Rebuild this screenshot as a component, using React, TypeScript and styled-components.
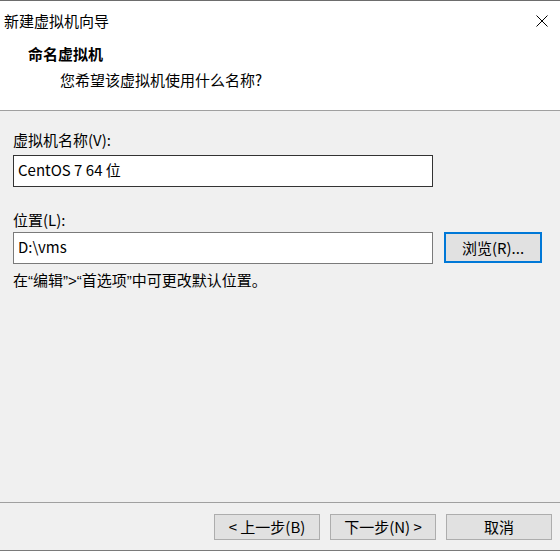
import React from 'react';
import styled, { createGlobalStyle } from 'styled-components';

const GlobalStyle = createGlobalStyle`
  html, body {
    margin: 0;
    padding: 0;
    background: #f0f0f0;
  }
  * {
    box-sizing: border-box;
  }
`;

const Window = styled.div`
  width: 560px;
  height: 551px;
  display: flex;
  flex-direction: column;
  background: #f0f0f0;
  border-top: 1px solid #6d6d6d;
  font-family: "Noto Sans CJK SC", "Noto Sans", sans-serif;
  font-size: 15px;
  line-height: 20px;
  color: #000;
`;

const TitleBar = styled.div`
  height: 39px;
  background: #fff;
  display: flex;
  align-items: center;
  justify-content: space-between;
  padding: 0 12px 0 4px;
`;

const CloseIcon = styled.svg`
  display: block;
  width: 12px;
  height: 12px;
`;

const Header = styled.div`
  height: 71px;
  background: #fff;
  border-bottom: 1px solid #a0a0a0;
  padding: 4px 0 0 28px;
`;

const Heading = styled.div`
  font-weight: bold;
`;

const SubHeading = styled.div`
  margin-top: 6px;
  padding-left: 32px;
`;

const Body = styled.div`
  flex: 1;
  padding: 19px 13px 0 13px;
  display: flex;
  flex-direction: column;
`;

const Label = styled.div<{ $top?: number; $gap: number }>`
  margin-top: ${p => p.$top ?? 0}px;
  margin-bottom: ${p => p.$gap}px;
`;

const Row = styled.div`
  display: flex;
  gap: 11px;
`;

const TextBox = styled.div<{ $dark?: boolean }>`
  width: 420px;
  height: 32px;
  background: #fff;
  border: 1px solid ${p => (p.$dark ? '#333333' : '#7a7a7a')};
  padding: 4px 0 0 4px;
`;

const Hint = styled.div`
  margin-top: 6px;
`;

const Quote = styled.span`
  font-family: "Liberation Sans", sans-serif;
`;

const Button = styled.div<{ $default?: boolean; $height?: number }>`
  width: ${p => (p.$default ? 98 : 106)}px;
  height: ${p => p.$height ?? 26}px;
  background: #e1e1e1;
  border: ${p => (p.$default ? '2px solid #0078d7' : '1px solid #adadad')};
  display: flex;
  align-items: center;
  justify-content: center;
`;

const Footer = styled.div`
  height: 49px;
  border-top: 1px solid #a0a0a0;
  border-bottom: 1px solid #7a7a7a;
  display: flex;
  justify-content: flex-end;
  gap: 10px;
  padding: 11px 8px 0 0;
`;

export default function App() {
  return (
    <>
      <GlobalStyle />
      <Window>
        <TitleBar>
          <div>新建虚拟机向导</div>
          <CloseIcon viewBox="0 0 12 12">
            <path d="M0.5 0.5 L11.5 11.5 M11.5 0.5 L0.5 11.5" stroke="#000" strokeWidth="1" fill="none" />
          </CloseIcon>
        </TitleBar>
        <Header>
          <Heading>命名虚拟机</Heading>
          <SubHeading>您希望该虚拟机使用什么名称?</SubHeading>
        </Header>
        <Body>
          <Label $gap={5}>虚拟机名称(V):</Label>
          <TextBox $dark>CentOS 7 64 位</TextBox>
          <Label $top={23} $gap={2}>位置(L):</Label>
          <Row>
            <TextBox>D:\vms</TextBox>
            <Button $default $height={31}>浏览(R)...</Button>
          </Row>
          <Hint>
            在<Quote>“</Quote>编辑<Quote>”&gt;“</Quote>首选项<Quote>”</Quote>中可更改默认位置。
          </Hint>
        </Body>
        <Footer>
          <Button>&lt; 上一步(B)</Button>
          <Button>下一步(N) &gt;</Button>
          <Button>取消</Button>
        </Footer>
      </Window>
    </>
  );
}
